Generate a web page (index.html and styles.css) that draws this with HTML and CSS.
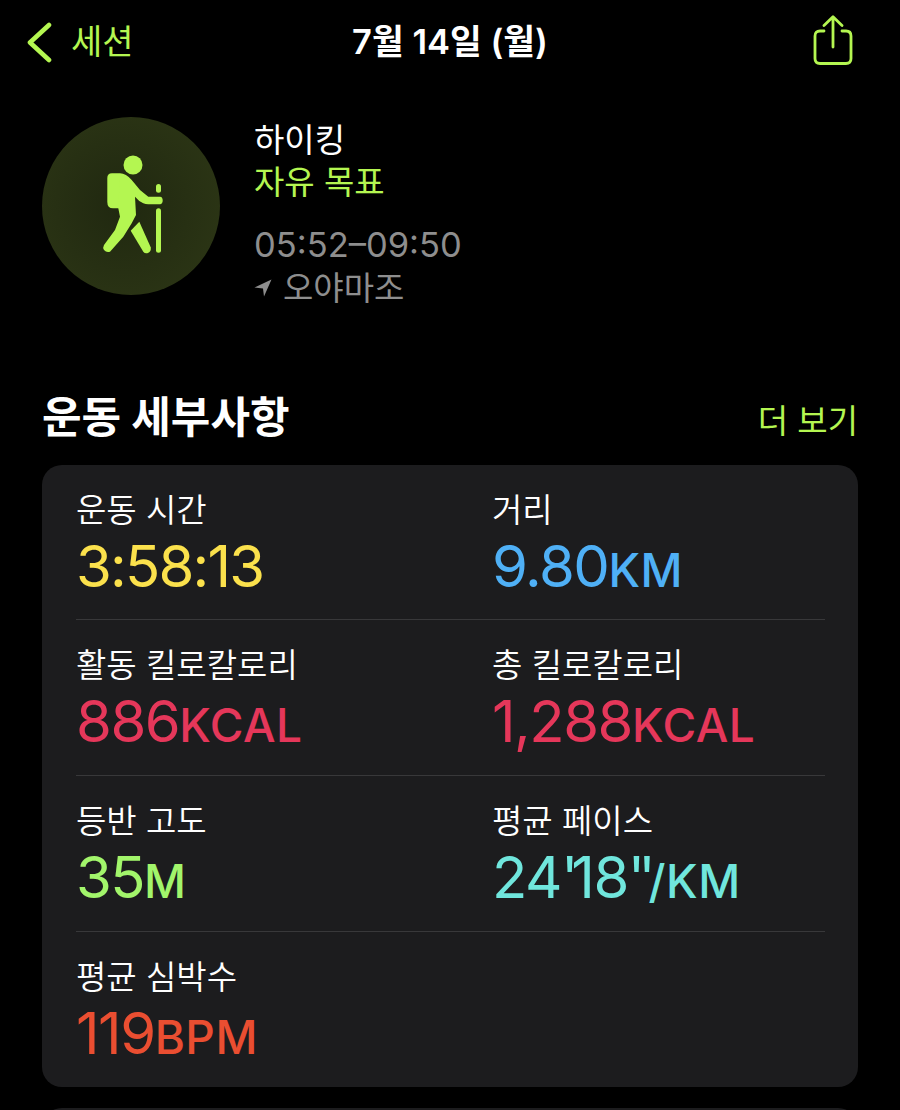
FILE: index.html
```html
<!DOCTYPE html>
<html lang="ko">
<head>
  <meta charset="UTF-8" />
  <meta name="viewport" content="width=device-width, initial-scale=1.0"/>
  <title>7월 14일 (월)</title>
  <link rel="stylesheet" href="styles.css">
</head>
<body>

  <header class="nav">
    <a class="back">
      <svg class="back-icon" width="26" height="42" viewBox="0 0 26 42">
        <path d="M23 4 L4 21.5 L23 39" fill="none" stroke="#b4f651" stroke-width="4.6" stroke-linecap="round" stroke-linejoin="round"/>
      </svg>
      <span>세션</span>
    </a>
    <div class="nav-title">7월 14일 (월)</div>
    <svg class="share-icon" width="40" height="50" viewBox="0 0 40 50">
      <path d="M11 16 H7 Q2 16 2 21 V43.500 Q2 48.500 7 48.500 H33 Q38 48.500 38 43.500 V21 Q38 16 33 16 H29" fill="none" stroke="#b4f651" stroke-width="2.8" stroke-linecap="round"/>
      <path d="M20 32 V2 M11 10.500 L20 1.800 L29 10.500" fill="none" stroke="#b4f651" stroke-width="2.8" stroke-linecap="round" stroke-linejoin="round"/>
    </svg>
  </header>

  <section class="summary">
    <div class="badge">
      <svg width="178" height="178" viewBox="0 0 178 178">
        <g fill="#b4f651">
          <circle cx="91" cy="48" r="9.500"/>
          <path d="M70 56.300 H78 V91.300 H71 Q65.300 91.300 65.300 85 V61 Q65.300 56.300 70 56.300 Z"/>
          <path d="M78 56.300 Q84 56.500 89.700 63 L98 73 L106.300 79.700 H118 Q120.700 80 120.700 83.300 Q120.700 87 118 87.300 H106.300 Q103.500 87.300 101.300 86.300 Q96.500 84 93 79.700 L94 98 L89.700 106.300 L81.300 119.700 L68 134.700 Q64.500 136 62 133 Q60.500 130.500 62 128 L73 113 L78 99.700 L76.300 91.300 Z"/>
          <path d="M97.300 104.700 L108.700 130.300 Q109.500 134.500 106 136 Q103 137 101.300 134.700 L88.700 113.700 Z"/>
          <rect x="114" y="67" width="5" height="8.700" rx="2.500"/>
          <rect x="114" y="91.300" width="5" height="44.400" rx="2.500"/>
        </g>
      </svg>
    </div>
    <div class="summary-text">
      <div class="activity">하이킹</div>
      <div class="goal">자유 목표</div>
      <div class="time">05:52–09:50</div>
      <div class="place">
        <svg width="18" height="18" viewBox="0 0 18 18"><path d="M17.500 .5 L.5 8.500 L9 9.500 L10 17.500 Z" fill="#8e8e8e"/></svg>
        <span>오야마조</span>
      </div>
    </div>
  </section>

  <div class="section-head">
    <h2>운동 세부사항</h2>
    <a class="more">더 보기</a>
  </div>

  <section class="card">
    <div class="row">
      <div class="metric">
        <div class="label">운동 시간</div>
        <div class="value yellow">3:58:13</div>
      </div>
      <div class="metric">
        <div class="label">거리</div>
        <div class="value blue">9.80<span class="unit">KM</span></div>
      </div>
    </div>
    <div class="row">
      <div class="metric">
        <div class="label">활동 킬로칼로리</div>
        <div class="value pink">886<span class="unit">KCAL</span></div>
      </div>
      <div class="metric">
        <div class="label">총 킬로칼로리</div>
        <div class="value pink">1,288<span class="unit">KCAL</span></div>
      </div>
    </div>
    <div class="row">
      <div class="metric">
        <div class="label">등반 고도</div>
        <div class="value green">35<span class="unit">M</span></div>
      </div>
      <div class="metric">
        <div class="label">평균 페이스</div>
        <div class="value cyan">24<span class="prime">'</span>18<span class="prime">''</span><span class="unit">/KM</span></div>
      </div>
    </div>
    <div class="row">
      <div class="metric">
        <div class="label">평균 심박수</div>
        <div class="value red">119<span class="unit">BPM</span></div>
      </div>
    </div>
  </section>

  <div class="next-card"></div>

</body>
</html>
```

FILE: styles.css
```css
html, body {
  height: 1110px;
  overflow: hidden;
}
body {
  margin: 0;
  padding: 0 42px;
  background: #000;
  color: #fff;
  font-family: Inter, "Noto Sans CJK KR", sans-serif;
}

.nav {
  display: grid;
  grid-template-columns: 1fr auto 1fr;
  align-items: start;
  height: 117px;
}
.back {
  display: flex;
  align-items: center;
  gap: 19px;
  margin: 21px 0 0 -16px;
  color: #b4f651;
  font-size: 34px;
  line-height: 42px;
}
.nav-title {
  margin-top: 18px;
  font-size: 34.500px;
  font-weight: 600;
  line-height: 48px;
}
.share-icon {
  justify-self: end;
  margin: 15px 5px 0 0;
}

.summary {
  display: flex;
  gap: 34px;
  height: 274px;
}
.badge {
  width: 178px;
  height: 178px;
  border-radius: 50%;
  background: radial-gradient(circle at 45% 50%, #202810, #2e3816);
}
.activity, .goal, .time, .place {
  font-size: 33px;
  line-height: 42px;
}
.activity {
  margin-top: 2px;
}
.goal {
  color: #b4f651;
}
.time {
  margin-top: 21px;
  color: #8e8e8e;
  font-size: 34.500px;
}
.place {
  display: flex;
  align-items: center;
  gap: 11px;
  margin-top: 1px;
  color: #8e8e8e;
}

.section-head {
  display: flex;
  align-items: flex-start;
  justify-content: space-between;
  height: 74px;
}
.section-head h2 {
  margin: 0;
  font-size: 43px;
  font-weight: 700;
  line-height: 52px;
}
.more {
  margin-top: 5px;
  color: #b4f651;
  font-size: 33px;
  line-height: 50px;
}

.card {
  height: 622px;
  padding: 0 33px 0 34px;
  border-radius: 20px;
  background: #1c1c1e;
}
.row {
  display: flex;
  height: 155px;
  box-sizing: border-box;
  border-bottom: 1px solid #38383a;
}
.row + .row {
  height: 156px;
}
.row:last-child {
  border-bottom: none;
}
.metric {
  flex: 0 0 416px;
  padding-top: 24px;
}
.label {
  font-size: 33px;
  font-weight: 350;
  line-height: 42px;
}
.value {
  font-size: 58px;
  line-height: 70px;
  letter-spacing: -1.500px;
}
.unit {
  font-size: 46px;
  font-weight: 450;
  letter-spacing: .5px;
}
.prime {
  letter-spacing: -7px;
}
.yellow { color: #fbe14c; letter-spacing: -1.800px; }
.blue { color: #4fb0f6; }
.pink { color: #e5375a; }
.green { color: #a2f56b; }
.cyan { color: #70e6dd; }
.red { color: #ea4e31; }

.next-card {
  height: 40px;
  margin-top: 21px;
  border-radius: 20px;
  background: #1c1c1e;
}
```
